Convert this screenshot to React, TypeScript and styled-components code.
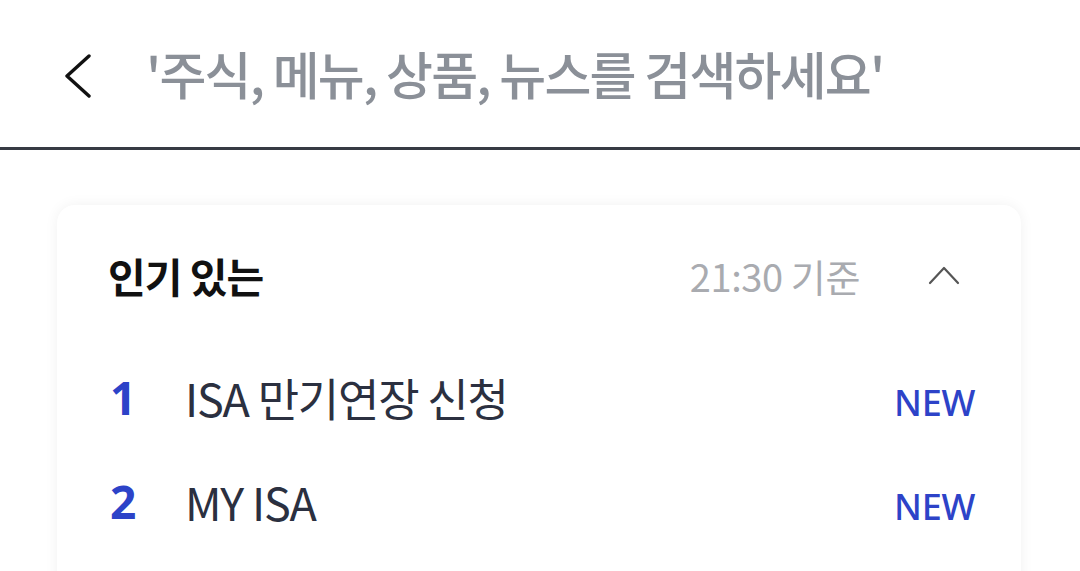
import React from "react";
import styled, { createGlobalStyle } from "styled-components";

const Global = createGlobalStyle`
  html, body { margin: 0; padding: 0; background: #ffffff; }
  body { font-family: "Noto Sans", "Noto Sans CJK KR", sans-serif; }
  * { box-sizing: border-box; }
`;

const Page = styled.div`
  width: 1080px;
  height: 571px;
  overflow: hidden;
  background: #ffffff;
`;

const SearchBar = styled.header`
  height: 150px;
  display: flex;
  align-items: center;
  padding: 0 0 0 60px;
  gap: 52px;
  border-bottom: 3px solid #373b44;
`;

const BackButton = styled.button`
  width: 34px;
  height: 46px;
  padding: 0;
  border: none;
  background: none;
  display: flex;
  align-items: center;
  justify-content: center;
  margin-top: 4px;
`;

const Placeholder = styled.div`
  font-family: "Noto Sans CJK KR", sans-serif;
  font-size: 51px;
  font-weight: 500;
  color: #8b9098;
  letter-spacing: -1.8px;
  margin-top: -2px;
`;

const Content = styled.main`
  padding: 55px 59px 0 57px;
`;

const Card = styled.section`
  background: #ffffff;
  border-radius: 18px;
  box-shadow: 0 0 14px rgba(0, 0, 0, 0.06);
  padding: 0 46px 0 51px;
  height: 420px;
`;

const CardHeader = styled.div`
  height: 140px;
  display: flex;
  align-items: center;
`;

const Title = styled.h2`
  margin: 0;
  flex: 1;
  font-family: "Noto Sans CJK KR", sans-serif;
  font-size: 41px;
  font-weight: 700;
  color: #111111;
  letter-spacing: -1px;
`;

const Time = styled.span`
  font-family: "Noto Sans CJK KR", sans-serif;
  font-size: 38px;
  font-weight: 400;
  color: #a9abb0;
  letter-spacing: -0.4px;
`;

const Toggle = styled.button`
  width: 47px;
  height: 40px;
  margin-left: 68px;
  padding: 0;
  border: none;
  background: none;
  display: flex;
  align-items: center;
  justify-content: flex-start;
`;

const Row = styled.div`
  height: 104px;
  display: flex;
  align-items: center;
`;

const Rank = styled.span`
  width: 77px;
  font-family: "Noto Sans", sans-serif;
  font-size: 46px;
  font-weight: 700;
  color: #2d43c8;
  padding-left: 2px;
  letter-spacing: -1px;
`;

const Label = styled.span`
  flex: 1;
  font-family: "Noto Sans CJK KR", sans-serif;
  font-size: 45px;
  font-weight: 400;
  color: #2b3040;
  letter-spacing: -1.2px;
`;

const Badge = styled.span`
  font-family: "Noto Sans", sans-serif;
  font-size: 36px;
  font-weight: 500;
  color: #2d43c8;
  letter-spacing: -0.3px;
  margin-top: 10px;
`;

const items = [
  { rank: 1, label: "ISA 만기연장 신청", badge: "NEW" },
  { rank: 2, label: "MY ISA", badge: "NEW" },
];

export default function App() {
  return (
    <Page>
      <Global />
      <SearchBar>
        <BackButton aria-label="뒤로">
          <svg width="30" height="44" viewBox="0 0 30 44" fill="none">
            <path d="M27 2 L5 22 L27 42" stroke="#111" strokeWidth="3.4" strokeLinecap="round" strokeLinejoin="round" />
          </svg>
        </BackButton>
        <Placeholder>'주식, 메뉴, 상품, 뉴스를 검색하세요'</Placeholder>
      </SearchBar>
      <Content>
        <Card>
          <CardHeader>
            <Title>인기 있는</Title>
            <Time>21:30 기준</Time>
            <Toggle aria-label="접기">
              <svg width="32" height="20" viewBox="0 0 32 20" fill="none">
                <path d="M2 18 L16 3 L30 18" stroke="#555" strokeWidth="2.2" strokeLinecap="round" strokeLinejoin="round" />
              </svg>
            </Toggle>
          </CardHeader>
          {items.map((it) => (
            <Row key={it.rank}>
              <Rank>{it.rank}</Rank>
              <Label>{it.label}</Label>
              <Badge>{it.badge}</Badge>
            </Row>
          ))}
        </Card>
      </Content>
    </Page>
  );
}
